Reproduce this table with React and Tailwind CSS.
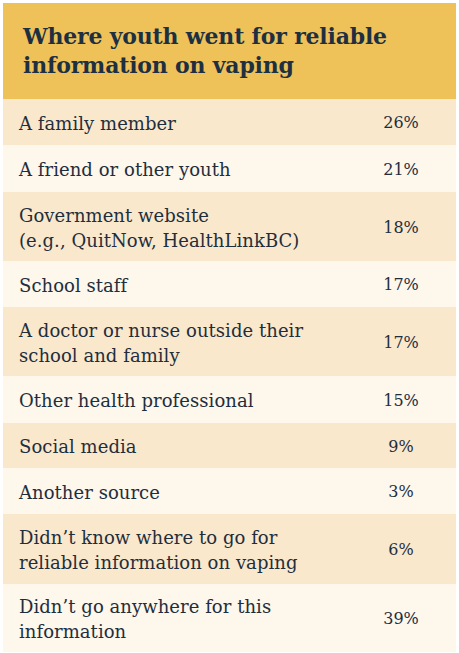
const rows = [
  { label: ["A family member"], pct: "26%", h: "h-[46px]" },
  { label: ["A friend or other youth"], pct: "21%", h: "h-[47px]" },
  { label: ["Government website", "(e.g., QuitNow, HealthLinkBC)"], pct: "18%", h: "h-[69px]" },
  { label: ["School staff"], pct: "17%", h: "h-[46px]" },
  { label: ["A doctor or nurse outside their", "school and family"], pct: "17%", h: "h-[69px]" },
  { label: ["Other health professional"], pct: "15%", h: "h-[47px]" },
  { label: ["Social media"], pct: "9%", h: "h-[45px]" },
  { label: ["Another source"], pct: "3%", h: "h-[46px]" },
  { label: ["Didn\u2019t know where to go for", "reliable information on vaping"], pct: "6%", h: "h-[70px]" },
  { label: ["Didn\u2019t go anywhere for this", "information"], pct: "39%", h: "h-[68px]" },
];

export default function App() {
  return (
    <div className="w-[459px] h-[653px] bg-white px-[3px] pt-[3px] font-['DejaVu_Serif',serif] text-[#1f2e3d]">
      <div className="bg-[#efc159] h-[96px] pl-[20px] pr-4 flex items-center">
        <h1 className="text-[22px] leading-[29px] font-bold tracking-[-0.2px] text-[#1d3042]">
          Where youth went for reliable
          <br />
          information on vaping
        </h1>
      </div>
      {rows.map((row, i) => (
        <div
          key={i}
          className={`flex items-center pl-4 pt-[2px] ${row.h} ${i % 2 === 0 ? "bg-[#f9e8cc]" : "bg-[#fdf7ec]"}`}
        >
          <div className="flex-1 text-[18px] leading-[25px] tracking-[0.05px]">
            {row.label.map((line, j) => (
              <div key={j}>{line}</div>
            ))}
          </div>
          <div className="w-[70px] mr-[20px] text-center text-[16px]">{row.pct}</div>
        </div>
      ))}
    </div>
  );
}
